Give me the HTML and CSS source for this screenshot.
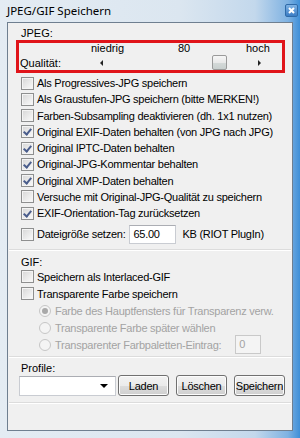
FILE: index.html
```html
<!DOCTYPE html>
<html lang="de">
<head>
  <meta charset="UTF-8" />
  <title>JPEG/GIF Speichern</title>
  <link rel="stylesheet" href="styles.css">
</head>
<body>
  <div class="window">
    <div class="titlebar">
      <span class="title">JPEG/GIF Speichern</span>
      <span class="close">
        <svg width="11" height="11" viewBox="0 0 11 11"><path d="M3 3 L8 8 M8 3 L3 8" stroke="#fff" stroke-width="2"/></svg>
      </span>
    </div>

    <div class="client">
      <div class="label">JPEG:</div>

      <div class="highlight">
        <div class="scale">
          <span>niedrig</span>
          <span>80</span>
          <span>hoch</span>
        </div>
        <div class="quality">
          <span>Qualität:</span>
          <div class="slider">
            <span class="arrow left"></span>
            <span class="thumb"></span>
            <span class="arrow right"></span>
          </div>
        </div>
      </div>

      <div class="options">
        <div class="row"><span class="cb"></span>Als Progressives-JPG speichern</div>
        <div class="row"><span class="cb"></span>Als Graustufen-JPG speichern (bitte MERKEN!)</div>
        <div class="row"><span class="cb"></span>Farben-Subsampling deaktivieren (dh. 1x1 nutzen)</div>
        <div class="row"><span class="cb on"></span>Original EXIF-Daten behalten (von JPG nach JPG)</div>
        <div class="row"><span class="cb on"></span>Original IPTC-Daten behalten</div>
        <div class="row"><span class="cb on"></span>Original-JPG-Kommentar behalten</div>
        <div class="row"><span class="cb on"></span>Original XMP-Daten behalten</div>
        <div class="row"><span class="cb"></span>Versuche mit Original-JPG-Qualität zu speichern</div>
        <div class="row"><span class="cb on"></span>EXIF-Orientation-Tag zurücksetzen</div>
      </div>

      <div class="row size">
        <span class="cb"></span>Dateigröße setzen:
        <span class="field">65.00</span>
        <span>KB (RIOT PlugIn)</span>
      </div>

      <div class="sep"></div>

      <div class="label">GIF:</div>
      <div class="gif-rows">
        <div class="row"><span class="cb"></span>Speichern als Interlaced-GIF</div>
        <div class="row"><span class="cb"></span>Transparente Farbe speichern</div>
        <div class="row radio disabled"><span class="rb on"></span>Farbe des Hauptfensters für Transparenz verw.</div>
        <div class="row radio disabled"><span class="rb"></span>Transparente Farbe später wählen</div>
        <div class="row radio disabled">
          <span class="rb"></span>Transparenter Farbpaletten-Eintrag:
          <span class="field small">0</span>
        </div>
      </div>

      <div class="sep tight"></div>

      <div class="label">Profile:</div>
      <div class="profile">
        <div class="combo"><span class="drop"></span></div>
        <button class="btn">Laden</button>
        <button class="btn">Löschen</button>
        <button class="btn">Speichern</button>
      </div>

      <div class="sep double"></div>
    </div>
  </div>
</body>
</html>
```

FILE: styles.css
```css
* {
  box-sizing: border-box;
  margin: 0;
  padding: 0;
}

body {
  width: 300px;
  height: 438px;
  overflow: hidden;
  font-family: 'Liberation Sans', Arial, sans-serif;
  font-size: 11px;
  color: #000;
}

.window {
  width: 300px;
  height: 438px;
  display: flex;
  flex-direction: column;
  padding: 0 7px 7px 7px;
  background: linear-gradient(to right, #e4ecf3 0%, #dbe6f0 60%, #c3d8ec 85%, #7fb2e2 96%, #3f8fd8 100%);
}

.titlebar {
  height: 22px;
  display: flex;
  align-items: center;
  justify-content: space-between;
}

.title {
  font-family: 'Noto Sans', sans-serif;
  font-size: 11.5px;
  color: #000;
  margin-top: -1px;
}

.close {
  width: 13px;
  height: 13px;
  margin-right: -5px;
  margin-top: -2px;
  display: flex;
  align-items: center;
  justify-content: center;
  border: 1px solid #2f6aa8;
  border-radius: 2px;
  background: linear-gradient(#7fb2e4, #3a7cc4);
}

.client {
  flex: 1;
  border: 1px solid #6f7f90;
  background: #f0f0f0;
  padding: 4px 7px 0 13px;
  display: flex;
  flex-direction: column;
}

.label {
  height: 13px;
  line-height: 13px;
}

.highlight {
  margin: 0 0 2px -5px;
  width: 269px;
  height: 33px;
  border: 3px solid #e0141a;
  padding: 0 0 0 1px;
}

.scale {
  display: flex;
  height: 11px;
  line-height: 11px;
  padding-left: 71px;
}

.scale span:nth-child(1) { width: 87px; }
.scale span:nth-child(2) { width: 68px; }

.quality {
  display: flex;
  align-items: center;
  height: 17px;
}

.quality > span {
  width: 80px;
}

.slider {
  width: 165px;
  height: 16px;
  display: flex;
  align-items: center;
}

.arrow {
  width: 0;
  height: 0;
  border-top: 3px solid transparent;
  border-bottom: 3px solid transparent;
}

.arrow.left {
  border-right: 3px solid #222;
}

.arrow.right {
  border-left: 3px solid #222;
  margin-left: 31px;
}

.thumb {
  width: 15px;
  height: 15px;
  margin-left: 109px;
  border: 1px solid #9a9a9a;
  border-radius: 2px;
  background: linear-gradient(#f6f6f6 0%, #e9e9e9 50%, #d4d9d8 51%, #c9d0cf 100%);
}

.options .row {
  height: 16.25px;
}

.row {
  display: flex;
  align-items: center;
  white-space: nowrap;
  letter-spacing: -0.25px;
}

.cb {
  width: 13px;
  height: 13px;
  flex: none;
  margin-right: 3px;
  border: 1px solid #8e8f8f;
  background: linear-gradient(135deg, #d6d6d6, #fbfbfb);
  box-shadow: inset 0 0 0 1px #f4f4f4;
  position: relative;
}

.cb.on::after {
  content: "";
  position: absolute;
  left: 3px;
  top: 1px;
  width: 3px;
  height: 6px;
  border-right: 2px solid #4a5d8c;
  border-bottom: 2px solid #4a5d8c;
  transform: rotate(40deg);
}

.size {
  height: 22px;
  margin-top: 2px;
}

.field {
  width: 47px;
  height: 19px;
  margin: 0 6px 0 4px;
  padding-left: 3px;
  line-height: 17px;
  background: #fff;
  border: 1px solid #c9ccd2;
  border-top-color: #abadb3;
}

.field.small {
  width: 26px;
  margin-left: 14px;
  background: #f4f4f4;
  border-color: #c9c9c9;
  color: #a3a3a3;
}

.sep {
  height: 2px;
  margin: 4px -6px 5px -12px;
  border-top: 1px solid #dcdcdc;
  border-bottom: 1px solid #fff;
}

.sep.tight {
  margin-top: 3px;
  margin-bottom: 4px;
}

.gif-rows {
  margin-top: -1px;
}

.gif-rows .row {
  height: 17px;
}

.radio {
  padding-left: 18px;
}

.disabled {
  color: #a3a3a3;
}

.rb {
  width: 12px;
  height: 12px;
  flex: none;
  margin-right: 4px;
  border-radius: 50%;
  border: 1px solid #c6c6c6;
  background: #f4f4f4;
  display: flex;
  align-items: center;
  justify-content: center;
}

.rb.on::after {
  content: "";
  width: 6px;
  height: 6px;
  border-radius: 50%;
  background: #a9a9a9;
}

.profile {
  display: flex;
  align-items: center;
  gap: 7px;
  height: 21px;
  margin: 0 0 0 -2px;
}

.combo {
  width: 97px;
  height: 20px;
  margin-right: -5px;
  background: #fff;
  border: 1px solid #c9ccd2;
  border-top-color: #abadb3;
  display: flex;
  align-items: center;
  justify-content: flex-end;
  padding-right: 7px;
}

.drop {
  width: 0;
  height: 0;
  border-left: 4px solid transparent;
  border-right: 4px solid transparent;
  border-top: 4px solid #000;
}

.btn {
  width: 51px;
  height: 21px;
  padding: 0;
  font-family: inherit;
  font-size: 11px;
  letter-spacing: -0.25px;
  color: #000;
  border: 1px solid #707070;
  border-radius: 3px;
  background: linear-gradient(#f2f2f2 0%, #ebebeb 50%, #dddddd 51%, #cfcfcf 100%);
  box-shadow: inset 0 0 0 1px #fcfcfc;
}

.sep.double {
  margin-top: 6px;
}
```
